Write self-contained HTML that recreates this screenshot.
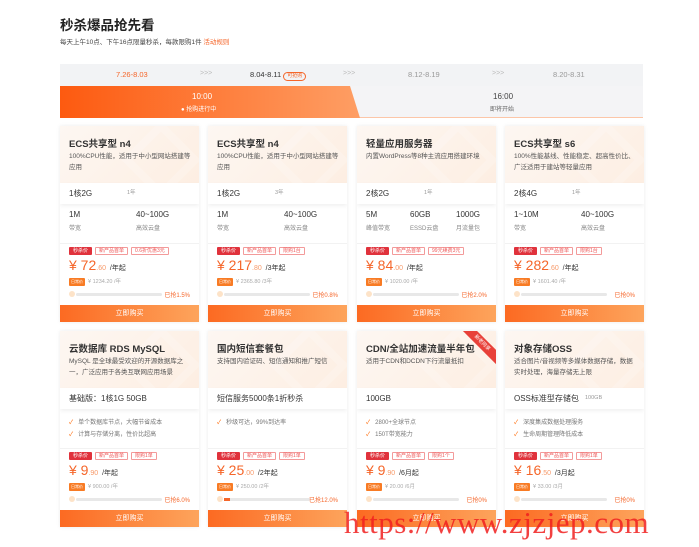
<!DOCTYPE html>
<html><head><meta charset="utf-8"><style>
*{margin:0;padding:0;box-sizing:border-box}
body{width:699px;height:547px;background:#fff;font-family:"Liberation Sans","Noto Sans CJK SC",sans-serif;color:#333;position:relative;overflow:hidden}
.a{position:absolute;white-space:nowrap}
.card{position:absolute;width:139px;height:196px;background:#fff;box-shadow:0 0 4px rgba(0,0,0,.08);overflow:hidden}
.hd{position:absolute;left:0;top:0;width:139px;height:57px;background:linear-gradient(135deg,#fdf7f2 0%,#fdeee2 100%)}
.hd:after{content:"";position:absolute;right:10px;top:6px;width:40px;height:40px;border:8px solid rgba(255,255,255,.2);transform:rotate(45deg)}
.t{position:absolute;left:9px;top:10px;font-size:9.5px;font-weight:bold;color:#333;white-space:nowrap}
.d{position:absolute;left:9px;top:25px;font-size:6.5px;line-height:11px;color:#555;width:125px}
.sp{position:absolute;left:0;top:57px;width:139px;height:21px;background:#fff;box-shadow:0 2px 4px rgba(0,0,0,.06);font-size:8px;line-height:21px;padding-left:9px;color:#333}
.sp i{font-style:normal;font-size:5.5px;color:#999;position:absolute;left:67px}
.v{position:absolute;top:84px;font-size:8px;color:#333}
.l{position:absolute;top:97px;font-size:6px;color:#888}
.f{position:absolute;left:9px;font-size:6px;color:#777}
.f b{color:#f60;font-weight:normal;margin-right:5px}
.dv{position:absolute;left:0;top:117px;width:139px;height:1px;background:#f2f2f2}
.tg{position:absolute;top:121px;left:9px;font-size:0}
.tg span{display:inline-block;height:8px;line-height:7px;font-size:5px;padding:0 3px;border:1px solid #f39a9a;color:#e55;margin-right:3px;border-radius:1px}
.tg span:first-child{background:#e0323c;border-color:#e0323c;color:#fff}
.pr{position:absolute;left:9px;top:131px;color:#f5662a;font-size:14px;white-space:nowrap}
.pr small{font-size:7px;color:#f79a6a}
.pr em{font-style:normal;font-size:7px;color:#333}
.og{position:absolute;left:9px;top:151px;font-size:5.5px;color:#aaa;white-space:nowrap}
.og span{display:inline-block;background:#f87b24;color:#fff;font-size:4px;padding:1px 2px;margin-right:3px;border-radius:1px}
.pb{position:absolute;left:16px;top:167px;width:86px;height:3px;background:#e8e8e8;border-radius:2px}
.dot{position:absolute;left:9px;top:165px;width:6px;height:6px;border-radius:3px;background:#fde3c8}
.pc{position:absolute;right:9px;top:164px;font-size:6px;color:#f5662a}
.bt{position:absolute;left:0;top:179px;width:139px;height:17px;background:linear-gradient(90deg,#fc6a22,#fda45c);color:#fff;font-size:7px;text-align:center;line-height:17px}
</style></head><body>
<div class="a" style="left:60px;top:14px;font-size:13.5px;font-weight:bold;color:#222">秒杀爆品抢先看</div>
<div class="a" style="left:60px;top:36px;font-size:6.5px;color:#444">每天上午10点、下午16点限量秒杀，每款限购1件 <span style="color:#f5662a">活动规则</span></div>
<div class="a" style="left:60px;top:64px;width:583px;height:22px;background:#f2f3f5"></div>
<div class="a" style="left:116px;top:70px;font-size:7.5px;color:#f5662a">7.26-8.03</div>
<div class="a" style="left:200px;top:70px;font-size:7px;color:#bbb">&gt;&gt;&gt;</div>
<div class="a" style="left:250px;top:70px;font-size:7.5px;color:#333">8.04-8.11 <span style="display:inline-block;border:1px solid #f5662a;color:#f5662a;font-size:5px;border-radius:5px;padding:0 3px;line-height:7px">可抢购</span></div>
<div class="a" style="left:343px;top:70px;font-size:7px;color:#bbb">&gt;&gt;&gt;</div>
<div class="a" style="left:408px;top:70px;font-size:7.5px;color:#999">8.12-8.19</div>
<div class="a" style="left:492px;top:70px;font-size:7px;color:#bbb">&gt;&gt;&gt;</div>
<div class="a" style="left:553px;top:70px;font-size:7.5px;color:#999">8.20-8.31</div>
<div class="a" style="left:60px;top:86px;width:583px;height:32px;background:#f4f4f6;border-bottom:1px solid #fcc6a8"></div>
<div class="a" style="left:60px;top:86px;width:300px;height:32px;background:linear-gradient(90deg,#fd5a10,#fe9e64);clip-path:polygon(0 0,290px 0,300px 100%,0 100%)"></div>
<div class="a" style="left:192px;top:92px;font-size:8px;color:#fff">10:00</div>
<div class="a" style="left:181px;top:104px;font-size:6px;color:#fff">● 抢购进行中</div>
<div class="a" style="left:493px;top:92px;font-size:8px;color:#444">16:00</div>
<div class="a" style="left:490px;top:104px;font-size:6px;color:#666">即将开始</div>

<!-- row1 -->
<div class="card" style="left:60px;top:126px"><div class="hd"></div><div class="t">ECS共享型 n4</div><div class="d">100%CPU性能，适用于中小型网站搭建等应用</div><div class="sp">1核2G<i>1年</i></div><div class="v" style="left:9px">1M</div><div class="l" style="left:9px">带宽</div><div class="v" style="left:76px">40~100G</div><div class="l" style="left:76px">高效云盘</div><div class="dv"></div><div class="tg"><span>秒杀价</span><span>新产品首单</span><span>0.6折优惠3元</span></div><div class="pr">¥ 72<small>.60</small> <em>/年起</em></div><div class="og"><span>日常价</span>¥ 1234.20 /年</div><div class="dot"></div><div class="pb"></div><div class="pc">已抢1.5%</div><div class="bt">立即购买</div></div>
<div class="card" style="left:208px;top:126px"><div class="hd"></div><div class="t">ECS共享型 n4</div><div class="d">100%CPU性能，适用于中小型网站搭建等应用</div><div class="sp">1核2G<i>3年</i></div><div class="v" style="left:9px">1M</div><div class="l" style="left:9px">带宽</div><div class="v" style="left:76px">40~100G</div><div class="l" style="left:76px">高效云盘</div><div class="dv"></div><div class="tg"><span>秒杀价</span><span>新产品首单</span><span>限购1台</span></div><div class="pr">¥ 217<small>.80</small> <em>/3年起</em></div><div class="og"><span>日常价</span>¥ 2365.80 /3年</div><div class="dot"></div><div class="pb"></div><div class="pc">已抢0.8%</div><div class="bt">立即购买</div></div>
<div class="card" style="left:357px;top:126px"><div class="hd"></div><div class="t">轻量应用服务器</div><div class="d">内置WordPress等8种主流应用搭建环境</div><div class="sp">2核2G<i>1年</i></div><div class="v" style="left:9px">5M</div><div class="l" style="left:9px">峰值带宽</div><div class="v" style="left:53px">60GB</div><div class="l" style="left:53px">ESSD云盘</div><div class="v" style="left:99px">1000G</div><div class="l" style="left:99px">月流量包</div><div class="dv"></div><div class="tg"><span>秒杀价</span><span>新产品首单</span><span>99元续费3元</span></div><div class="pr">¥ 84<small>.00</small> <em>/年起</em></div><div class="og"><span>日常价</span>¥ 1020.00 /年</div><div class="dot"></div><div class="pb"></div><div class="pc">已抢2.0%</div><div class="bt">立即购买</div></div>
<div class="card" style="left:505px;top:126px"><div class="hd"></div><div class="t">ECS共享型 s6</div><div class="d">100%性能基线、性能稳定、超高性价比、广泛适用于建站等轻量应用</div><div class="sp">2核4G<i>1年</i></div><div class="v" style="left:9px">1~10M</div><div class="l" style="left:9px">带宽</div><div class="v" style="left:76px">40~100G</div><div class="l" style="left:76px">高效云盘</div><div class="dv"></div><div class="tg"><span>秒杀价</span><span>新产品首单</span><span>限购1台</span></div><div class="pr">¥ 282<small>.60</small> <em>/年起</em></div><div class="og"><span>日常价</span>¥ 1601.40 /年</div><div class="dot"></div><div class="pb"></div><div class="pc">已抢0%</div><div class="bt">立即购买</div></div>

<!-- row2 -->
<div class="card" style="left:60px;top:331px"><div class="hd"></div><div class="t">云数据库 RDS MySQL</div><div class="d">MySQL 是全球最受欢迎的开源数据库之一，广泛应用于各类互联网应用场景</div><div class="sp">基础版：1核1G 50GB</div><div class="f" style="top:86px"><b>✓</b>单个数据库节点，大幅节省成本</div><div class="f" style="top:98px"><b>✓</b>计算与存储分离，性价比超高</div><div class="dv"></div><div class="tg"><span>秒杀价</span><span>新产品首单</span><span>限购1单</span></div><div class="pr">¥ 9<small>.90</small> <em>/年起</em></div><div class="og"><span>日常价</span>¥ 900.00 /年</div><div class="dot"></div><div class="pb"></div><div class="pc">已抢6.0%</div><div class="bt">立即购买</div></div>
<div class="card" style="left:208px;top:331px"><div class="hd"></div><div class="t">国内短信套餐包</div><div class="d">支持国内验证码、短信通知和推广短信</div><div class="sp">短信服务5000条1折秒杀</div><div class="f" style="top:86px"><b>✓</b>秒级可达，99%到达率</div><div class="dv"></div><div class="tg"><span>秒杀价</span><span>新产品首单</span><span>限购1单</span></div><div class="pr">¥ 25<small>.00</small> <em>/2年起</em></div><div class="og"><span>日常价</span>¥ 250.00 /2年</div><div class="dot"></div><div class="pb"><div style="width:6px;height:3px;background:#f5662a"></div></div><div class="pc">已抢12.0%</div><div class="bt">立即购买</div></div>
<div class="card" style="left:357px;top:331px"><div class="hd"></div><div class="t">CDN/全站加速流量半年包</div><div class="d">适用于CDN和DCDN下行流量抵扣</div><div class="sp">100GB</div><div class="f" style="top:86px"><b>✓</b>2800+全球节点</div><div class="f" style="top:98px"><b>✓</b>150T带宽能力</div><div class="dv"></div><div class="tg"><span>秒杀价</span><span>新产品首单</span><span>限购1个</span></div><div class="pr">¥ 9<small>.90</small> <em>/6月起</em></div><div class="og"><span>日常价</span>¥ 20.00 /6月</div><div class="dot"></div><div class="pb"></div><div class="pc">已抢0%</div><div class="bt">立即购买</div><div style="position:absolute;right:-16px;top:7px;width:60px;height:10px;background:#e8413a;transform:rotate(45deg);color:#fff;font-size:5px;text-align:center;line-height:10px">新老同享</div></div>
<div class="card" style="left:505px;top:331px"><div class="hd"></div><div class="t">对象存储OSS</div><div class="d">适合图片/音视频等多媒体数据存储，数据实时处理，海量存储无上限</div><div class="sp">OSS标准型存储包<i style="left:80px">100GB</i></div><div class="f" style="top:86px"><b>✓</b>深度集成数据处理服务</div><div class="f" style="top:98px"><b>✓</b>生命周期管理降低成本</div><div class="dv"></div><div class="tg"><span>秒杀价</span><span>新产品首单</span><span>限购1单</span></div><div class="pr">¥ 16<small>.50</small> <em>/3月起</em></div><div class="og"><span>日常价</span>¥ 33.00 /3月</div><div class="dot"></div><div class="pb"></div><div class="pc">已抢0%</div><div class="bt">立即购买</div></div>

<div class="a" style="left:344px;top:505px;font-family:'Liberation Serif',serif;font-size:31px;color:rgba(240,30,30,.85);letter-spacing:0.5px">https://www.zjzjep.com</div>
</body></html>
